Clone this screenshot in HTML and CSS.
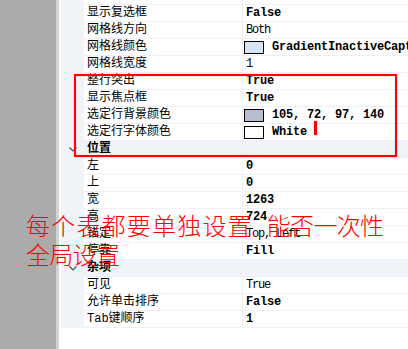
FILE: index.html
```html
<!DOCTYPE html>
<html>
<head>
<meta charset="utf-8">
<link rel="stylesheet" href="styles.css">
</head>
<body>
<div class="app">
  <div class="side"></div>
  <div class="edge"></div>
  <div class="grid">
    <div class="row"><div class="gut"></div><div class="name">显示行标题</div><div class="val b">True</div></div>
    <div class="row"><div class="gut"></div><div class="name">显示复选框</div><div class="val b">False</div></div>
    <div class="row"><div class="gut"></div><div class="name">网格线方向</div><div class="val">Both</div></div>
    <div class="row"><div class="gut"></div><div class="name">网格线颜色</div><div class="val b"><span class="sw sw-grad"></span>GradientInactiveCaption</div></div>
    <div class="row"><div class="gut"></div><div class="name">网格线宽度</div><div class="val">1</div></div>
    <div class="row"><div class="gut"></div><div class="name">整行突出</div><div class="val b">True</div></div>
    <div class="row"><div class="gut"></div><div class="name">显示焦点框</div><div class="val b">True</div></div>
    <div class="row"><div class="gut"></div><div class="name">选定行背景颜色</div><div class="val b"><span class="sw sw-sel"></span>105, 72, 97, 140</div></div>
    <div class="row"><div class="gut"></div><div class="name">选定行字体颜色</div><div class="val b"><span class="sw sw-white"></span>White</div></div>
    <div class="row cat"><div class="gut"><svg class="chev" width="8" height="5" viewBox="0 0 8 5"><polyline points="0.5,0.5 4,4 7.5,0.5" fill="none" stroke="#4d4d4d" stroke-width="1.2"/></svg></div><div class="name">位置</div><div class="val"></div></div>
    <div class="row"><div class="gut"></div><div class="name">左</div><div class="val b">0</div></div>
    <div class="row"><div class="gut"></div><div class="name">上</div><div class="val b">0</div></div>
    <div class="row"><div class="gut"></div><div class="name">宽</div><div class="val b">1263</div></div>
    <div class="row"><div class="gut"></div><div class="name">高</div><div class="val b">724</div></div>
    <div class="row"><div class="gut"></div><div class="name">锚定</div><div class="val">Top, Left</div></div>
    <div class="row"><div class="gut"></div><div class="name">停靠</div><div class="val b">Fill</div></div>
    <div class="row cat"><div class="gut"><svg class="chev" width="8" height="5" viewBox="0 0 8 5"><polyline points="0.5,0.5 4,4 7.5,0.5" fill="none" stroke="#4d4d4d" stroke-width="1.2"/></svg></div><div class="name">杂项</div><div class="val"></div></div>
    <div class="row"><div class="gut"></div><div class="name">可见</div><div class="val">True</div></div>
    <div class="row"><div class="gut"></div><div class="name">允许单击排序</div><div class="val b">False</div></div>
    <div class="row"><div class="gut"></div><div class="name">Tab键顺序</div><div class="val b">1</div></div>
  </div>
  <div class="box"></div>
  <div class="mark"></div>
  <div class="note"><span class="wide">每个表都要单独设置</span><span class="gap"> </span><span class="tight">能否一次性</span><br><span class="tight">全局设置</span></div>
</div>
</body>
</html>
```

FILE: styles.css
```css
html, body {
  margin: 0;
  padding: 0;
  background: #ffffff;
}
.app {
  position: relative;
  display: flex;
  width: 408px;
  height: 349px;
  overflow: hidden;
  background: #ffffff;
  font-family: "Liberation Mono", "Noto Sans CJK SC", monospace;
  font-size: 12px;
  color: #000;
}
.side {
  flex: none;
  width: 56px;
  background: #ababab;
}
.edge {
  flex: none;
  width: 3px;
  background: #d2d2d2;
  margin-right: 2px;
}
.grid {
  flex: 1;
  display: flex;
  flex-direction: column;
  margin-top: -12px;
}
.row {
  flex: none;
  display: grid;
  grid-template-columns: 23px 159px 1fr;
  height: 17px;
}
.gut {
  background: #f0f4f9;
  display: flex;
  align-items: center;
  justify-content: center;
}
.name {
  box-sizing: border-box;
  border-bottom: 1px solid #eef0f3;
  border-right: 1px solid #eef0f3;
  padding-left: 3px;
  line-height: 16px;
  white-space: nowrap;
  overflow: hidden;
}
.val {
  box-sizing: border-box;
  border-bottom: 1px solid #eef0f3;
  padding-left: 3px;
  line-height: 16px;
  white-space: nowrap;
  overflow: hidden;
  display: flex;
  align-items: center;
  letter-spacing: -1.2px;
}
.val.b {
  font-weight: bold;
  letter-spacing: -0.2px;
}
.cat .name,
.cat .val {
  background: #f0f4f9;
  border-right-color: #f0f4f9;
}
.cat .name {
  font-weight: bold;
}
.chev {
  margin-left: 1px;
  margin-top: 0;
}
.sw {
  flex: none;
  box-sizing: border-box;
  width: 20px;
  height: 13px;
  border: 1px solid #000;
  margin-left: -2px;
  margin-right: 8px;
}
.sw-grad { background: #d7e4f2; }
.sw-sel { background: #b6bdd0; }
.sw-white { background: #ffffff; }
.box {
  position: absolute;
  left: 74px;
  top: 74px;
  width: 323px;
  height: 83px;
  box-sizing: border-box;
  border: 2px solid #ff0000;
  box-shadow: 0 0 1px #ff8080, inset 0 0 1px #ff8080;
}
.mark {
  position: absolute;
  left: 314px;
  top: 121px;
  width: 3px;
  height: 14px;
  background: #ff0000;
  box-shadow: 0 0 1px #ff9090;
}
.note {
  position: absolute;
  left: 26px;
  top: 210px;
  font-family: "Noto Sans CJK SC", sans-serif;
  font-weight: 300;
  font-size: 24px;
  line-height: 29px;
  color: #ff0000;
  white-space: nowrap;
}
.wide {
  letter-spacing: 1.2px;
}
.tight {
  letter-spacing: -0.7px;
}
.gap {
  display: inline-block;
  width: 14px;
}
```
